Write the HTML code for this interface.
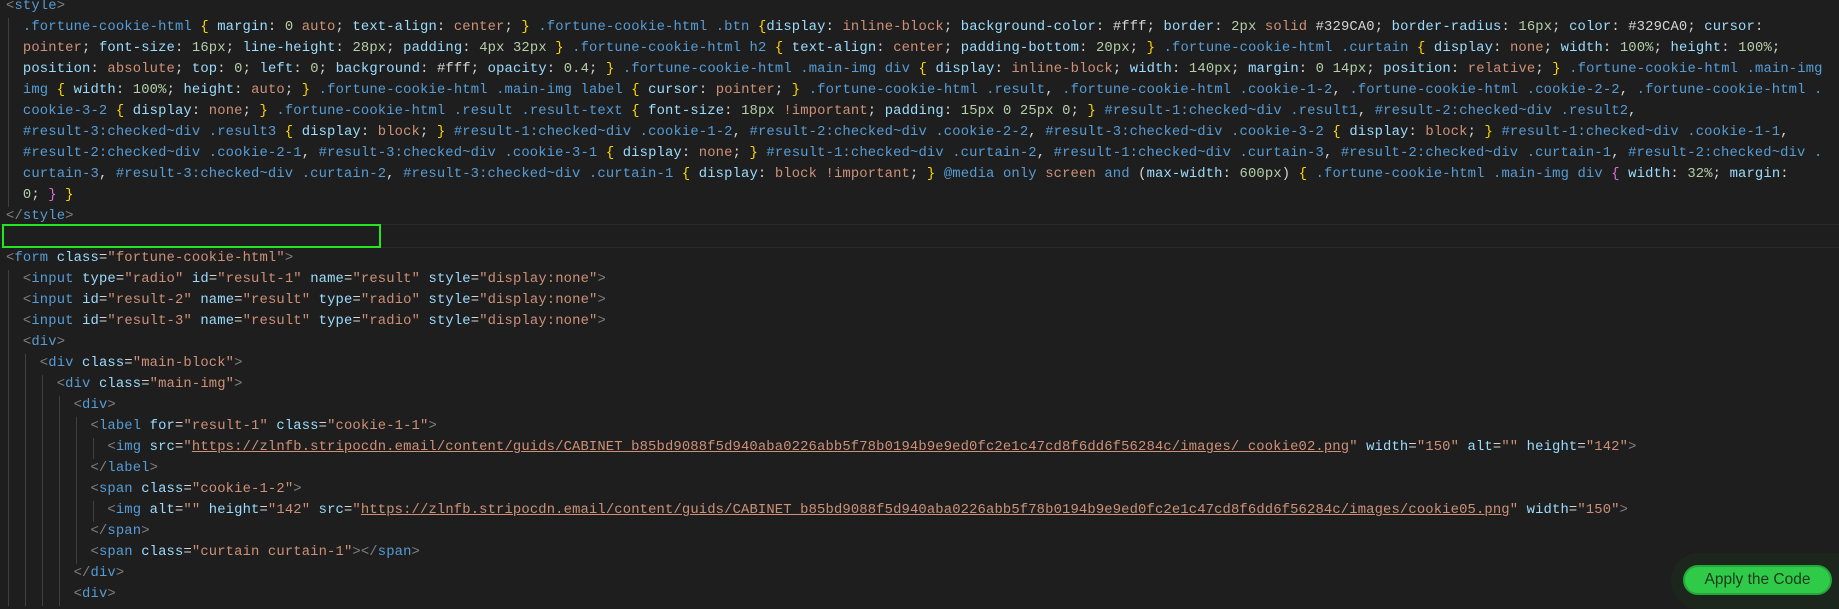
<!DOCTYPE html>
<html><head><meta charset="utf-8">
<style>
html,body{margin:0;padding:0;background:#1e1e1e;width:1839px;height:605px;overflow:hidden;}
#ed{position:absolute;left:6px;top:-3.8px;font-family:"Liberation Mono",monospace;font-size:13.85px;letter-spacing:0.14px;color:#d4d4d4;}
.l{height:21px;line-height:21px;white-space:pre;}
.t{color:#808080}.g{color:#569cd6}.a{color:#9cdcfe}.s{color:#ce9178}.u{color:#ce9178;text-decoration:underline;}
.sel{color:#569cd6}.p{color:#9cdcfe}.n{color:#b5cea8}.k{color:#ce9178}.b{color:#ffd700}.m{color:#da70d6}
.gd{position:absolute;width:1px;background:#404040;}
#hl{position:absolute;left:0;top:224px;width:1839px;height:22px;border-top:1px solid #2a2a2a;border-bottom:1px solid #2a2a2a;}
#box{position:absolute;left:2px;top:224px;width:375px;height:20px;border:2px solid #22e622;}
#halo{position:absolute;left:1671px;top:553px;width:190px;height:56px;border-radius:28px;background:#1d261d;}
#btn{position:absolute;left:1683px;top:565px;width:145px;height:26px;border:2px solid #22a83a;background:#2fcb48;border-radius:16px;font-family:"Liberation Sans",sans-serif;font-size:15.5px;color:#1a3a1c;text-align:center;line-height:26px;}
</style></head><body>
<div id="hl"></div>
<div class="gd" style="left:8px;top:17.6px;height:189px"></div>
<div class="gd" style="left:8px;top:269.6px;height:336px"></div>
<div class="gd" style="left:25px;top:353.6px;height:252px"></div>
<div class="gd" style="left:42px;top:374.6px;height:231px"></div>
<div class="gd" style="left:59px;top:395.6px;height:210px"></div>
<div class="gd" style="left:76px;top:416.6px;height:147px"></div>
<div class="gd" style="left:93px;top:437.6px;height:21px"></div>
<div class="gd" style="left:93px;top:500.6px;height:21px"></div>
<div id="ed">
<div class="l"><span class="t">&lt;</span><span class="g">style</span><span class="t">&gt;</span></div>
<div class="l">  <span class="sel">.fortune-cookie-html</span> <span class="b">{</span> <span class="p">margin</span>: <span class="n">0</span> <span class="k">auto</span>; <span class="p">text-align</span>: <span class="k">center</span>; <span class="b">}</span> <span class="sel">.fortune-cookie-html .btn</span> <span class="b">{</span><span class="p">display</span>: <span class="k">inline-block</span>; <span class="p">background-color</span>: #fff; <span class="p">border</span>: <span class="n">2px</span> <span class="k">solid</span> #329CA0; <span class="p">border-radius</span>: <span class="n">16px</span>; <span class="p">color</span>: #329CA0; <span class="p">cursor</span>:</div>
<div class="l">  <span class="k">pointer</span>; <span class="p">font-size</span>: <span class="n">16px</span>; <span class="p">line-height</span>: <span class="n">28px</span>; <span class="p">padding</span>: <span class="n">4px 32px</span> <span class="b">}</span> <span class="sel">.fortune-cookie-html h2</span> <span class="b">{</span> <span class="p">text-align</span>: <span class="k">center</span>; <span class="p">padding-bottom</span>: <span class="n">20px</span>; <span class="b">}</span> <span class="sel">.fortune-cookie-html .curtain</span> <span class="b">{</span> <span class="p">display</span>: <span class="k">none</span>; <span class="p">width</span>: <span class="n">100%</span>; <span class="p">height</span>: <span class="n">100%</span>;</div>
<div class="l">  <span class="p">position</span>: <span class="k">absolute</span>; <span class="p">top</span>: <span class="n">0</span>; <span class="p">left</span>: <span class="n">0</span>; <span class="p">background</span>: #fff; <span class="p">opacity</span>: <span class="n">0.4</span>; <span class="b">}</span> <span class="sel">.fortune-cookie-html .main-img div</span> <span class="b">{</span> <span class="p">display</span>: <span class="k">inline-block</span>; <span class="p">width</span>: <span class="n">140px</span>; <span class="p">margin</span>: <span class="n">0 14px</span>; <span class="p">position</span>: <span class="k">relative</span>; <span class="b">}</span> <span class="sel">.fortune-cookie-html .main-img</span></div>
<div class="l">  <span class="sel">img</span> <span class="b">{</span> <span class="p">width</span>: <span class="n">100%</span>; <span class="p">height</span>: <span class="k">auto</span>; <span class="b">}</span> <span class="sel">.fortune-cookie-html .main-img label</span> <span class="b">{</span> <span class="p">cursor</span>: <span class="k">pointer</span>; <span class="b">}</span> <span class="sel">.fortune-cookie-html .result</span>, <span class="sel">.fortune-cookie-html .cookie-1-2</span>, <span class="sel">.fortune-cookie-html .cookie-2-2</span>, <span class="sel">.fortune-cookie-html .</span></div>
<div class="l">  <span class="sel">cookie-3-2</span> <span class="b">{</span> <span class="p">display</span>: <span class="k">none</span>; <span class="b">}</span> <span class="sel">.fortune-cookie-html .result .result-text</span> <span class="b">{</span> <span class="p">font-size</span>: <span class="n">18px</span> <span class="k">!important</span>; <span class="p">padding</span>: <span class="n">15px 0 25px 0</span>; <span class="b">}</span> <span class="sel">#result-1:checked~div .result1</span>, <span class="sel">#result-2:checked~div .result2</span>,</div>
<div class="l">  <span class="sel">#result-3:checked~div .result3</span> <span class="b">{</span> <span class="p">display</span>: <span class="k">block</span>; <span class="b">}</span> <span class="sel">#result-1:checked~div .cookie-1-2</span>, <span class="sel">#result-2:checked~div .cookie-2-2</span>, <span class="sel">#result-3:checked~div .cookie-3-2</span> <span class="b">{</span> <span class="p">display</span>: <span class="k">block</span>; <span class="b">}</span> <span class="sel">#result-1:checked~div .cookie-1-1</span>,</div>
<div class="l">  <span class="sel">#result-2:checked~div .cookie-2-1</span>, <span class="sel">#result-3:checked~div .cookie-3-1</span> <span class="b">{</span> <span class="p">display</span>: <span class="k">none</span>; <span class="b">}</span> <span class="sel">#result-1:checked~div .curtain-2</span>, <span class="sel">#result-1:checked~div .curtain-3</span>, <span class="sel">#result-2:checked~div .curtain-1</span>, <span class="sel">#result-2:checked~div .</span></div>
<div class="l">  <span class="sel">curtain-3</span>, <span class="sel">#result-3:checked~div .curtain-2</span>, <span class="sel">#result-3:checked~div .curtain-1</span> <span class="b">{</span> <span class="p">display</span>: <span class="k">block</span> <span class="k">!important</span>; <span class="b">}</span> <span class="g">@media</span> <span class="g">only</span> <span class="k">screen</span> <span class="g">and</span> (<span class="p">max-width</span>: <span class="n">600px</span>) <span class="b">{</span> <span class="sel">.fortune-cookie-html .main-img div</span> <span class="m">{</span> <span class="p">width</span>: <span class="n">32%</span>; <span class="p">margin</span>:</div>
<div class="l">  <span class="n">0</span>; <span class="m">}</span> <span class="b">}</span></div>
<div class="l"><span class="t">&lt;/</span><span class="g">style</span><span class="t">&gt;</span></div>
<div class="l"> </div>
<div class="l"><span class="t">&lt;</span><span class="g">form</span> <span class="a">class</span>=<span class="s">"fortune-cookie-html"</span><span class="t">&gt;</span></div>
<div class="l">  <span class="t">&lt;</span><span class="g">input</span> <span class="a">type</span>=<span class="s">"radio"</span> <span class="a">id</span>=<span class="s">"result-1"</span> <span class="a">name</span>=<span class="s">"result"</span> <span class="a">style</span>=<span class="s">"display:none"</span><span class="t">&gt;</span></div>
<div class="l">  <span class="t">&lt;</span><span class="g">input</span> <span class="a">id</span>=<span class="s">"result-2"</span> <span class="a">name</span>=<span class="s">"result"</span> <span class="a">type</span>=<span class="s">"radio"</span> <span class="a">style</span>=<span class="s">"display:none"</span><span class="t">&gt;</span></div>
<div class="l">  <span class="t">&lt;</span><span class="g">input</span> <span class="a">id</span>=<span class="s">"result-3"</span> <span class="a">name</span>=<span class="s">"result"</span> <span class="a">type</span>=<span class="s">"radio"</span> <span class="a">style</span>=<span class="s">"display:none"</span><span class="t">&gt;</span></div>
<div class="l">  <span class="t">&lt;</span><span class="g">div</span><span class="t">&gt;</span></div>
<div class="l">    <span class="t">&lt;</span><span class="g">div</span> <span class="a">class</span>=<span class="s">"main-block"</span><span class="t">&gt;</span></div>
<div class="l">      <span class="t">&lt;</span><span class="g">div</span> <span class="a">class</span>=<span class="s">"main-img"</span><span class="t">&gt;</span></div>
<div class="l">        <span class="t">&lt;</span><span class="g">div</span><span class="t">&gt;</span></div>
<div class="l">          <span class="t">&lt;</span><span class="g">label</span> <span class="a">for</span>=<span class="s">"result-1"</span> <span class="a">class</span>=<span class="s">"cookie-1-1"</span><span class="t">&gt;</span></div>
<div class="l">            <span class="t">&lt;</span><span class="g">img</span> <span class="a">src</span>=<span class="s">"</span><span class="u">https://zlnfb.stripocdn.email/content/guids/CABINET_b85bd9088f5d940aba0226abb5f78b0194b9e9ed0fc2e1c47cd8f6dd6f56284c/images/_cookie02.png</span><span class="s">"</span> <span class="a">width</span>=<span class="s">"150"</span> <span class="a">alt</span>=<span class="s">""</span> <span class="a">height</span>=<span class="s">"142"</span><span class="t">&gt;</span></div>
<div class="l">          <span class="t">&lt;/</span><span class="g">label</span><span class="t">&gt;</span></div>
<div class="l">          <span class="t">&lt;</span><span class="g">span</span> <span class="a">class</span>=<span class="s">"cookie-1-2"</span><span class="t">&gt;</span></div>
<div class="l">            <span class="t">&lt;</span><span class="g">img</span> <span class="a">alt</span>=<span class="s">""</span> <span class="a">height</span>=<span class="s">"142"</span> <span class="a">src</span>=<span class="s">"</span><span class="u">https://zlnfb.stripocdn.email/content/guids/CABINET_b85bd9088f5d940aba0226abb5f78b0194b9e9ed0fc2e1c47cd8f6dd6f56284c/images/cookie05.png</span><span class="s">"</span> <span class="a">width</span>=<span class="s">"150"</span><span class="t">&gt;</span></div>
<div class="l">          <span class="t">&lt;/</span><span class="g">span</span><span class="t">&gt;</span></div>
<div class="l">          <span class="t">&lt;</span><span class="g">span</span> <span class="a">class</span>=<span class="s">"curtain curtain-1"</span><span class="t">&gt;&lt;/</span><span class="g">span</span><span class="t">&gt;</span></div>
<div class="l">        <span class="t">&lt;/</span><span class="g">div</span><span class="t">&gt;</span></div>
<div class="l">        <span class="t">&lt;</span><span class="g">div</span><span class="t">&gt;</span></div>
</div>
<div id="box"></div>
<div id="halo"></div>
<div id="btn">Apply the Code</div>
</body></html>
